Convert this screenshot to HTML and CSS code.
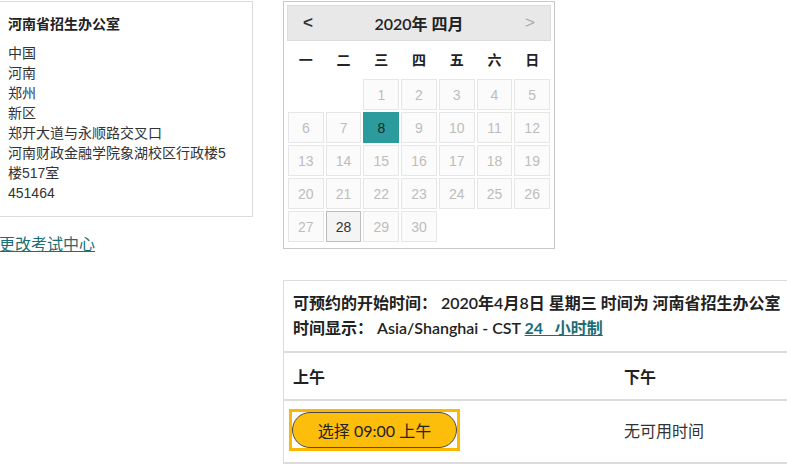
FILE: index.html
```html
<!DOCTYPE html>
<html lang="zh">
<head>
<meta charset="utf-8">
<title>预约</title>
<link rel="stylesheet" href="styles.css">
</head>
<body>
<div class="page">
  <div class="top">
    <div class="left">
      <div class="addr-box">
        <div class="addr-title">河南省招生办公室</div>
        <div class="addr-lines">
          <div>中国</div>
          <div>河南</div>
          <div>郑州</div>
          <div>新区</div>
          <div>郑开大道与永顺路交叉口</div>
          <div>河南财政金融学院象湖校区行政楼5楼517室</div>
          <div>451464</div>
        </div>
      </div>
      <a class="change-link" href="#">更改考试中心</a>
    </div>
    <div class="calendar">
      <div class="cal-head">
        <span class="nav prev">&lt;</span>
        <span class="cal-title">2020年 四月</span>
        <span class="nav next">&gt;</span>
      </div>
      <div class="cal-grid">
        <div class="dow">一</div><div class="dow">二</div><div class="dow">三</div><div class="dow">四</div><div class="dow">五</div><div class="dow">六</div><div class="dow">日</div>
        <div class="empty"></div><div class="empty"></div>
        <div class="day">1</div><div class="day">2</div><div class="day">3</div><div class="day">4</div><div class="day">5</div>
        <div class="day">6</div><div class="day">7</div><div class="day sel">8</div><div class="day">9</div><div class="day">10</div><div class="day">11</div><div class="day">12</div>
        <div class="day">13</div><div class="day">14</div><div class="day">15</div><div class="day">16</div><div class="day">17</div><div class="day">18</div><div class="day">19</div>
        <div class="day">20</div><div class="day">21</div><div class="day">22</div><div class="day">23</div><div class="day">24</div><div class="day">25</div><div class="day">26</div>
        <div class="day">27</div><div class="day today">28</div><div class="day">29</div><div class="day">30</div>
      </div>
    </div>
  </div>
  <div class="slots">
    <div class="slots-info">
      <div>可预约的开始时间： 2020年4月8日 星期三 时间为 河南省招生办公室</div>
      <div>时间显示： Asia/Shanghai - CST <a class="fmt-link" href="#">24&nbsp;&nbsp;&nbsp;小时制</a></div>
    </div>
    <div class="slots-row slots-headrow">
      <div class="cell">上午</div>
      <div class="cell">下午</div>
    </div>
    <div class="slots-row slots-bodyrow">
      <div class="cell"><span class="pick-wrap"><button class="pick">选择 09:00 上午</button></span></div>
      <div class="cell none">无可用时间</div>
    </div>
  </div>
</div>
</body>
</html>
```
FILE: styles.css
```css
html, body {
  margin: 0;
  padding: 0;
  background: #fff;
}
body {
  overflow: hidden;
  font-family: "Noto Sans CJK SC", sans-serif;
  color: #333;
}
.page {
  padding-top: 1px;
  width: 900px;
}
.top {
  display: flex;
  align-items: flex-start;
  gap: 30px;
}
.left {
  margin-left: -1px;
  width: 254px;
}
.addr-box {
  border: 1px solid #dcdcdc;
  padding: 12px 20px 13px 8px;
  font-family: "Liberation Sans", "Noto Sans CJK SC", sans-serif;
  font-size: 14px;
  color: #333;
}
.addr-title {
  font-weight: bold;
  line-height: 20px;
  margin-bottom: 9px;
  color: #222;
}
.addr-lines {
  line-height: 20px;
}
.change-link {
  display: block;
  margin-top: 16px;
  font-size: 16px;
  line-height: 20px;
  color: #1d6d74;
  text-decoration: underline;
}
.calendar {
  width: 264px;
  border: 1px solid #c8c8c8;
  padding: 3px 3px 6px 3px;
}
.cal-head {
  height: 34px;
  background: #e8e8e8;
  border: 1px solid #dcdcdc;
  display: flex;
  align-items: center;
  justify-content: space-between;
  padding: 0 15px 0 15px;
  font-family: "Lato", "Noto Sans CJK SC", sans-serif;
}
.cal-title {
  font-size: 16px;
  font-weight: 600;
  color: #222;
}
.nav {
  font-size: 17px;
  font-weight: bold;
  color: #333;
  font-family: "Liberation Sans", sans-serif;
}
.nav.next {
  color: #aaa;
  font-weight: normal;
}
.cal-grid {
  display: grid;
  grid-template-columns: repeat(7, 1fr);
  grid-template-rows: 36px;
  grid-auto-rows: 31px;
  gap: 2px;
  padding: 0 1px;
}
.dow {
  display: flex;
  align-items: center;
  justify-content: center;
  font-size: 14px;
  font-weight: bold;
  color: #222;
}
.day {
  display: flex;
  align-items: center;
  justify-content: center;
  border: 1px solid #e6e6e6;
  background: #fbfbfb;
  color: #bdbdbd;
  font-family: "Liberation Sans", sans-serif;
  font-size: 14px;
}
.day.sel {
  background: #2b9b9e;
  border-color: #2b9b9e;
  color: #1a2a2a;
}
.day.today {
  background: #f4f4f4;
  border-color: #bdbdbd;
  color: #333;
}
.slots {
  margin-top: 27px;
  margin-left: 283px;
  width: 600px;
  border-left: 1px solid #dcdcdc;
  border-top: 1px solid #dcdcdc;
  font-family: "Lato", "Noto Sans CJK SC", sans-serif;
  font-size: 16px;
  color: #222;
}
.slots-info {
  padding: 9px 9px 11px 9px;
  line-height: 25px;
  font-weight: 600;
  border-bottom: 2px solid #dcdcdc;
}
.fmt-link {
  color: #1d6d74;
  text-decoration: underline;
  font-weight: bold;
}
.slots-row {
  display: grid;
  grid-template-columns: 331px 1fr;
  border-bottom: 2px solid #dcdcdc;
}
.slots-headrow {
  height: 46px;
  font-weight: 600;
}
.slots-bodyrow {
  height: 61px;
}
.cell {
  display: flex;
  align-items: center;
  padding-left: 9px;
}
.slots-bodyrow .cell {
  padding-left: 5px;
  padding-bottom: 3px;
}
.slots-bodyrow .cell.none {
  padding-left: 9px;
  color: #333;
}
.pick-wrap {
  display: inline-flex;
  border: 3px solid #fbb800;
  background: #fff;
}
.pick {
  width: 165px;
  height: 36px;
  border: 1px solid #4a4a4a;
  border-radius: 18px;
  background: #fdbd0b;
  color: #222;
  font-family: "Lato", "Noto Sans CJK SC", sans-serif;
  font-size: 16px;
  padding: 0;
  margin: 0;
  outline: none;
}
```
